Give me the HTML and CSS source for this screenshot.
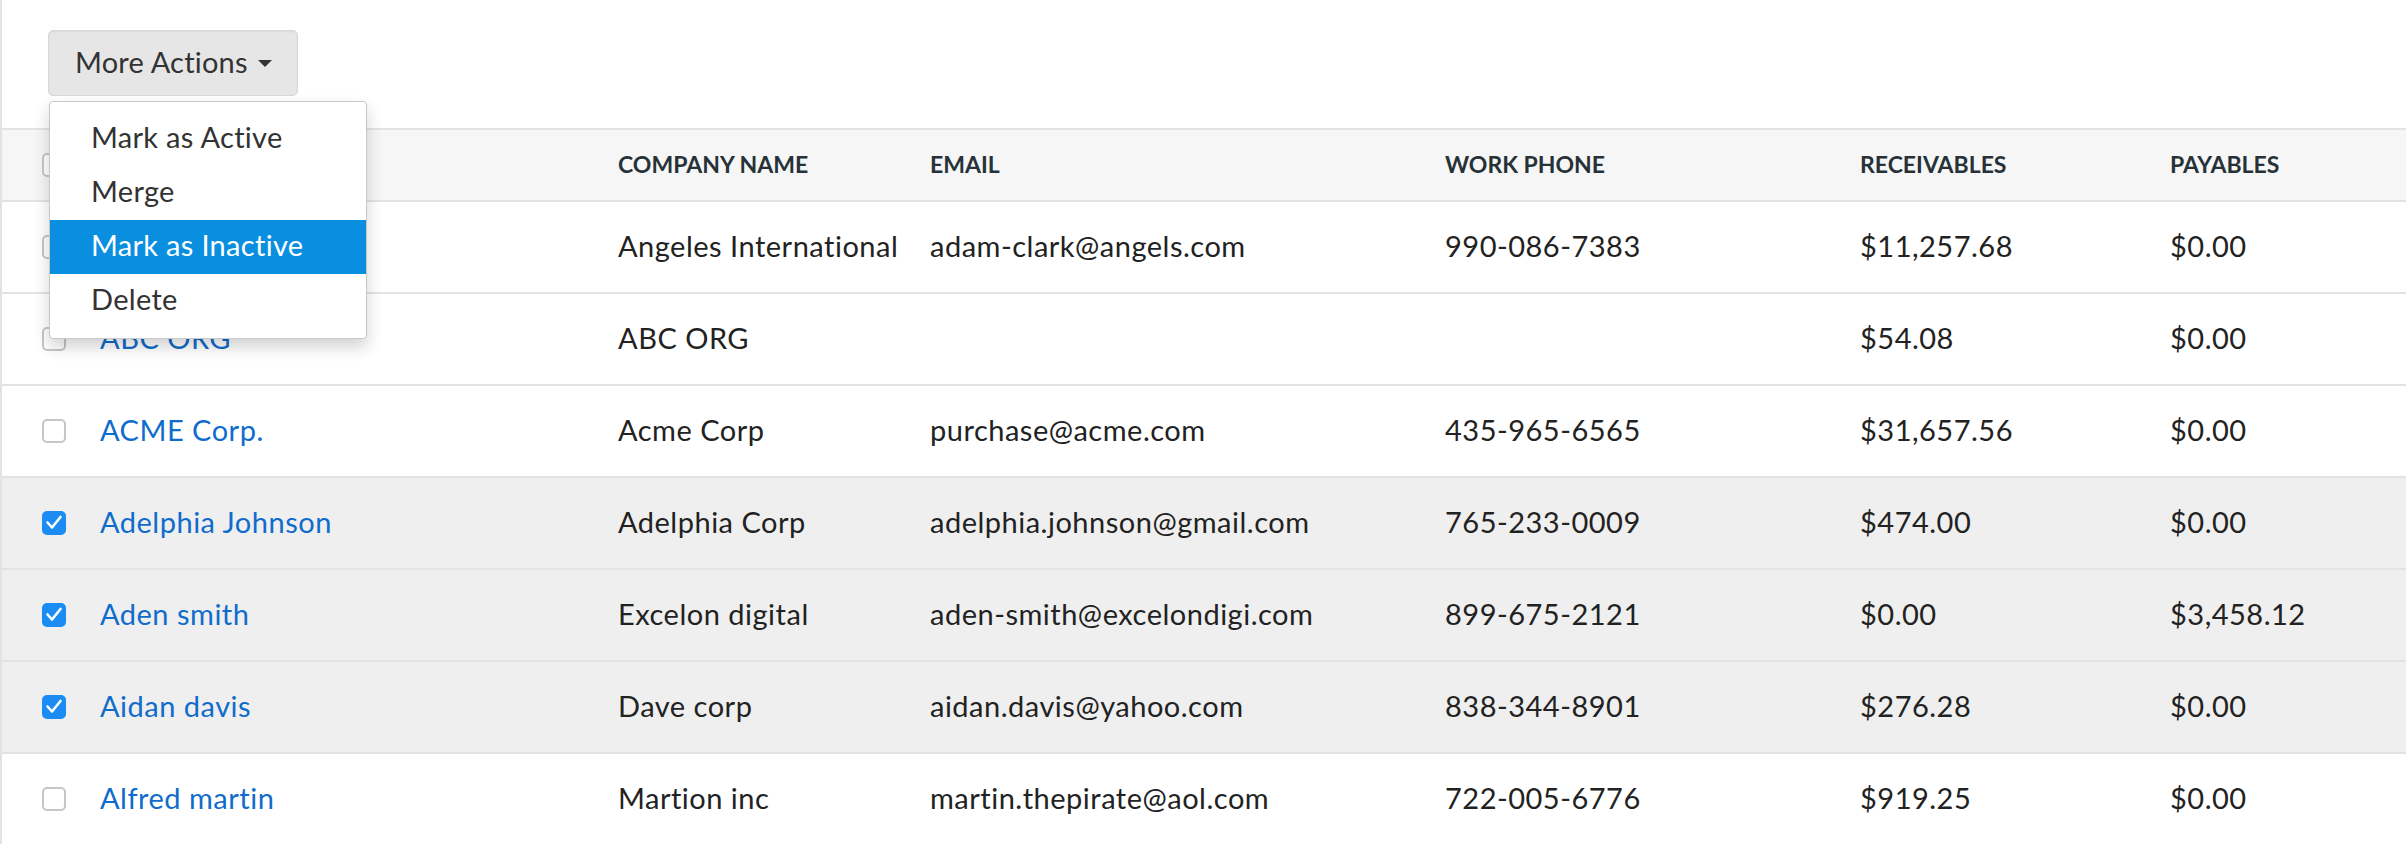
FILE: index.html
```html
<!DOCTYPE html>
<html lang="en">
<head>
<meta charset="UTF-8">
<meta name="viewport" content="width=device-width, initial-scale=1.0">
<title>Customers</title>
<link rel="stylesheet" href="styles.css">
</head>
<body>
<div class="page">
    <div class="toolbar">
        <div class="actions">
            <button class="btn-more">More Actions <span class="caret"></span></button>
            <ul class="menu">
                <li>Mark as Active</li>
                <li>Merge</li>
                <li class="active">Mark as Inactive</li>
                <li>Delete</li>
            </ul>
        </div>
    </div>

    <table class="list">
        <colgroup>
            <col class="c-check">
            <col class="c-name">
            <col class="c-company">
            <col class="c-email">
            <col class="c-phone">
            <col class="c-recv">
            <col class="c-pay">
        </colgroup>
        <thead>
            <tr>
                <th><span class="box"></span></th>
                <th>Name</th>
                <th>Company Name</th>
                <th>Email</th>
                <th>Work Phone</th>
                <th>Receivables</th>
                <th>Payables</th>
            </tr>
        </thead>
        <tbody>
            <tr>
                <td><span class="box"></span></td>
                <td><a href="#">Adam Clark</a></td>
                <td>Angeles International</td>
                <td>adam-clark@angels.com</td>
                <td>990-086-7383</td>
                <td>$11,257.68</td>
                <td>$0.00</td>
            </tr>
            <tr>
                <td><span class="box"></span></td>
                <td><a href="#">ABC ORG</a></td>
                <td>ABC ORG</td>
                <td></td>
                <td></td>
                <td>$54.08</td>
                <td>$0.00</td>
            </tr>
            <tr>
                <td><span class="box"></span></td>
                <td><a href="#">ACME Corp.</a></td>
                <td>Acme Corp</td>
                <td>purchase@acme.com</td>
                <td>435-965-6565</td>
                <td>$31,657.56</td>
                <td>$0.00</td>
            </tr>
            <tr class="selected">
                <td><span class="box checked"><svg viewBox="0 0 24 24"><path d="M5.5 11.5 L10 16.5 L18.5 6"/></svg></span></td>
                <td><a href="#">Adelphia Johnson</a></td>
                <td>Adelphia Corp</td>
                <td>adelphia.johnson@gmail.com</td>
                <td>765-233-0009</td>
                <td>$474.00</td>
                <td>$0.00</td>
            </tr>
            <tr class="selected">
                <td><span class="box checked"><svg viewBox="0 0 24 24"><path d="M5.5 11.5 L10 16.5 L18.5 6"/></svg></span></td>
                <td><a href="#">Aden smith</a></td>
                <td>Excelon digital</td>
                <td>aden-smith@excelondigi.com</td>
                <td>899-675-2121</td>
                <td>$0.00</td>
                <td>$3,458.12</td>
            </tr>
            <tr class="selected">
                <td><span class="box checked"><svg viewBox="0 0 24 24"><path d="M5.5 11.5 L10 16.5 L18.5 6"/></svg></span></td>
                <td><a href="#">Aidan davis</a></td>
                <td>Dave corp</td>
                <td>aidan.davis@yahoo.com</td>
                <td>838-344-8901</td>
                <td>$276.28</td>
                <td>$0.00</td>
            </tr>
            <tr>
                <td><span class="box"></span></td>
                <td><a href="#">Alfred martin</a></td>
                <td>Martion inc</td>
                <td>martin.thepirate@aol.com</td>
                <td>722-005-6776</td>
                <td>$919.25</td>
                <td>$0.00</td>
            </tr>
        </tbody>
    </table>
</div>
</body>
</html>
```

FILE: styles.css
```css
body {
    margin: 0;
    font-family: Lato, "Open Sans", sans-serif;
    font-size: 29px;
    letter-spacing: 0.5px;
    color: #222;
    background: #fff;
    overflow: hidden;
}
.page {
    border-left: 2px solid #e3e3e3;
    min-height: 844px;
}
.toolbar {
    padding: 30px 0 32px 46px;
}
.actions {
    position: relative;
    display: inline-block;
}
.btn-more {
    display: flex;
    align-items: center;
    height: 66px;
    width: 250px;
    padding: 0 0 4px 26px;
    font-family: inherit;
    font-size: 29px;
    letter-spacing: 0.2px;
    color: #333;
    background-color: #e6e6e6;
    border: 1px solid #d8d8d8;
    border-radius: 5px;
    box-shadow: inset 0 1px 2px rgba(0, 0, 0, 0.05);
}
.caret {
    display: inline-block;
    margin-left: 10px;
    margin-top: 5px;
    border-top: 7px solid #333;
    border-left: 7px solid transparent;
    border-right: 7px solid transparent;
}
.menu {
    position: absolute;
    top: 71px;
    left: 1px;
    width: 318px;
    box-sizing: border-box;
    margin: 0;
    padding: 10px 0;
    list-style: none;
    background: #fff;
    border: 1px solid #c9c9c9;
    border-radius: 4px;
    box-shadow: 0 8px 16px rgba(0, 0, 0, 0.18);
    z-index: 10;
}
.menu li {
    height: 54px;
    box-sizing: border-box;
    line-height: 50px;
    padding: 0 0 4px 41px;
    color: #333;
    letter-spacing: 0.3px;
}
.menu li.active {
    background-color: #0a8fe0;
    color: #fff;
}
.list {
    width: 2404px;
    table-layout: fixed;
    border-collapse: separate;
    border-spacing: 0;
}
.c-check { width: 98px; }
.c-name { width: 518px; }
.c-company { width: 312px; }
.c-email { width: 515px; }
.c-phone { width: 415px; }
.c-recv { width: 310px; }
.c-pay { width: 236px; }
th, td {
    box-sizing: border-box;
    padding: 0;
    text-align: left;
    vertical-align: middle;
    white-space: nowrap;
}
th {
    height: 74px;
    padding-bottom: 3px;
    font-size: 23px;
    font-weight: 700;
    letter-spacing: 0;
    text-transform: uppercase;
    color: #263238;
    background-color: #f6f6f6;
    border-top: 2px solid #e3e3e3;
    border-bottom: 2px solid #e3e3e3;
}
td {
    height: 92px;
    padding-bottom: 4px;
    border-bottom: 2px solid #e3e3e3;
}
th:first-child, td:first-child {
    padding-left: 40px;
    padding-bottom: 0;
}
tr.selected td {
    background-color: #efefef;
}
a {
    color: #106ccc;
    text-decoration: none;
}
.box {
    display: block;
    width: 24px;
    height: 24px;
    box-sizing: border-box;
    border: 2px solid #c6c6c6;
    border-radius: 5px;
    background: #fff;
}
.box.checked {
    border: none;
    background-color: #1a8cf3;
}
.box svg {
    display: block;
    width: 24px;
    height: 24px;
    fill: none;
    stroke: #fff;
    stroke-width: 2.6;
    stroke-linecap: round;
    stroke-linejoin: round;
}
```
